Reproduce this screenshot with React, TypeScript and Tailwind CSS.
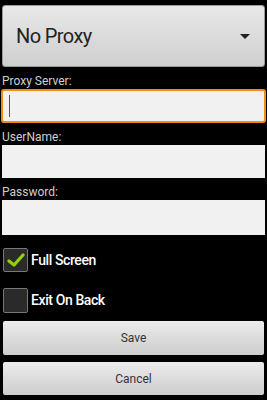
export default function App() {
  const font = { fontFamily: 'Roboto, "Noto Sans", sans-serif' };
  return (
    <div className="h-[400px] w-[267px] overflow-hidden bg-black" style={font}>
      {/* Proxy type spinner */}
      <div className="mx-[2px] mt-[5px] flex h-[62px] items-center rounded-[3px] border border-[#9a9a9a] bg-gradient-to-b from-[#e8e8e8] to-[#cfcfcf] pl-[13px] pr-[14px]">
        <span className="flex-1 text-[20px] tracking-[-0.6px] text-[#222]">No Proxy</span>
        <span className="h-0 w-0 border-x-[5px] border-t-[5px] border-x-transparent border-t-[#222]" />
      </div>

      <div className="flex h-[22px] items-end pb-[2px] pl-[2px] text-[12px] leading-none text-[#cfcfcf]">Proxy Server:</div>
      <div className="mx-[1px] flex h-[34px] items-center rounded-[3px] border-2 border-[#f08c1a] bg-[#f1f1f1] pl-[6px]">
        <div className="h-[22px] w-px bg-[#555]" />
      </div>

      <div className="flex h-[22px] items-end pb-[2px] pl-[2px] text-[12px] leading-none text-[#cfcfcf]">UserName:</div>
      <div className="mx-[2px] h-[33px] bg-[#f1f1f1]" />

      <div className="flex h-[22px] items-end pb-[2px] pl-[2px] text-[12px] leading-none text-[#cfcfcf]">Password:</div>
      <div className="mx-[2px] h-[35px] bg-[#f1f1f1]" />

      <div className="mt-[13px] flex h-[24px] items-center gap-[3px] pl-[3px]">
        <div className="flex h-[24px] w-[25px] items-center justify-center rounded-[2px] border border-[#777] bg-[#2a2a2a]">
          <svg width="18" height="16" viewBox="0 0 18 16">
            <path d="M2 9 L7 13 L16 3" fill="none" stroke="#8fd400" strokeWidth="3.2" strokeLinecap="round" strokeLinejoin="round" />
          </svg>
        </div>
        <span className="text-[14px] font-medium tracking-[-0.4px] text-white">Full Screen</span>
      </div>

      <div className="mt-[16px] flex h-[25px] items-center gap-[3px] pl-[3px]">
        <div className="h-[25px] w-[25px] rounded-[2px] border border-[#777] bg-[#2a2a2a]" />
        <span className="text-[14px] font-medium tracking-[-0.4px] text-white">Exit On Back</span>
      </div>

      <div className="mx-[3px] mt-[8px] flex h-[34px] items-center justify-center rounded-[2px] bg-gradient-to-b from-[#ececec] to-[#cdcdcd] text-[12px] text-[#333]">Save</div>
      <div className="mx-[3px] mt-[7px] flex h-[33px] items-center justify-center rounded-[2px] bg-gradient-to-b from-[#ececec] to-[#cdcdcd] text-[12px] text-[#333]">Cancel</div>
    </div>
  );
}
